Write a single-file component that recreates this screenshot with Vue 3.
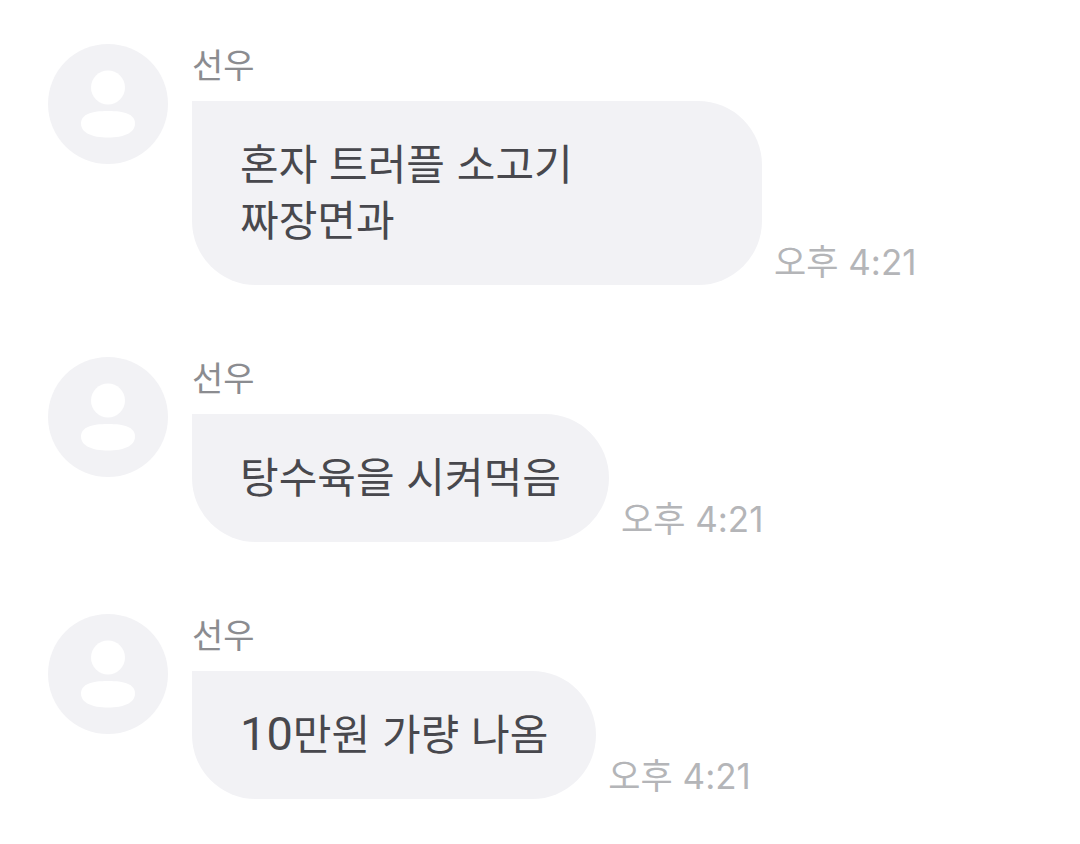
<script setup>
const messages = [
  { id: 1, name: '선우', lines: [{ text: '혼자 트러플 소고기' }, { text: '짜장면과' }], time: '오후 4:21', wide: true },
  { id: 2, name: '선우', lines: [{ text: '탕수육을 시켜먹음' }], time: '오후 4:21' },
  { id: 3, name: '선우', lines: [{ amount: '10', text: '만원 가량 나옴' }], time: '오후 4:21' },
]
</script>

<template>
  <main class="chat">
    <article v-for="m in messages" :key="m.id" class="message">
      <svg class="avatar" viewBox="0 0 120 120" aria-hidden="true">
        <circle cx="60" cy="60" r="60" fill="#f2f2f5" />
        <circle cx="60" cy="43.500" r="17" fill="#fff" />
        <path d="M60 67C76 67 87 70 87 79.500C87 89 76 93.500 60 93.500C44 93.500 33 89 33 79.500C33 70 44 67 60 67Z" fill="#fff" />
      </svg>
      <div class="body">
        <div class="name">{{ m.name }}</div>
        <div class="row">
          <p class="bubble" :class="{ wide: m.wide }">
            <span v-for="line in m.lines" :key="line.text" class="line"><span v-if="line.amount" class="amount">{{ line.amount }}</span>{{ line.text }}</span>
          </p>
          <time class="time">{{ m.time }}</time>
        </div>
      </div>
    </article>
  </main>
</template>

<style>
body {
  background: #fff;
}
</style>

<style scoped>
.chat {
  display: flex;
  flex-direction: column;
  gap: 72px;
  padding: 44px 48px;
  font-family: Inter, "Noto Sans CJK KR", sans-serif;
}
.message {
  display: flex;
  align-items: flex-start;
  gap: 24px;
}
.avatar {
  width: 120px;
  height: 120px;
  flex: none;
}
.name {
  height: 57px;
  font-size: 34px;
  line-height: 44px;
  color: #8b8c90;
}
.row {
  display: flex;
  align-items: flex-end;
  gap: 12px;
}
.bubble {
  box-sizing: border-box;
  margin: 0;
  padding: 36px 48px;
  border-radius: 0 64px 64px 64px;
  background: #f2f2f5;
  color: #48484d;
  font-size: 42px;
  line-height: 56px;
}
.wide {
  width: 570px;
}
.line {
  display: block;
  white-space: nowrap;
}
.amount {
  font-family: Roboto, sans-serif;
  font-size: 47px;
  line-height: 1;
}
.time {
  font-size: 35px;
  line-height: 46px;
  color: #b4b5b8;
  white-space: nowrap;
}
</style>
